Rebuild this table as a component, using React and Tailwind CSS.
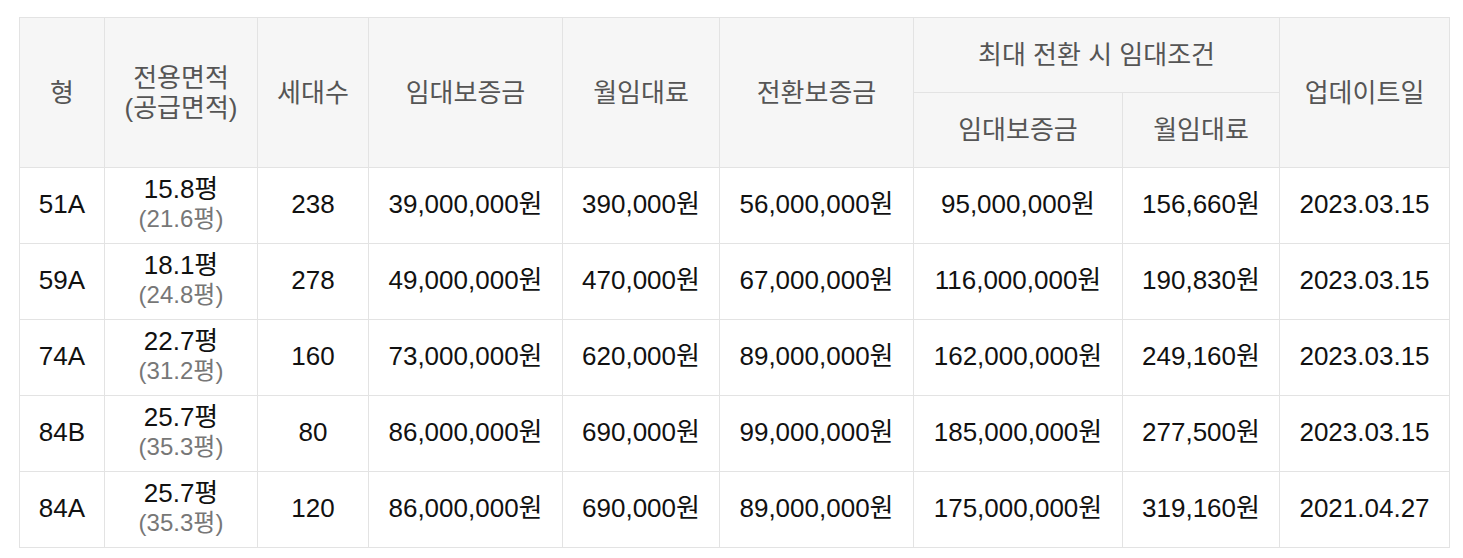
const rows = [
  { type: '51A', area: '15.8평', supply: '(21.6평)', units: '238', deposit: '39,000,000원', rent: '390,000원', conv: '56,000,000원', maxDeposit: '95,000,000원', maxRent: '156,660원', date: '2023.03.15' },
  { type: '59A', area: '18.1평', supply: '(24.8평)', units: '278', deposit: '49,000,000원', rent: '470,000원', conv: '67,000,000원', maxDeposit: '116,000,000원', maxRent: '190,830원', date: '2023.03.15' },
  { type: '74A', area: '22.7평', supply: '(31.2평)', units: '160', deposit: '73,000,000원', rent: '620,000원', conv: '89,000,000원', maxDeposit: '162,000,000원', maxRent: '249,160원', date: '2023.03.15' },
  { type: '84B', area: '25.7평', supply: '(35.3평)', units: '80', deposit: '86,000,000원', rent: '690,000원', conv: '99,000,000원', maxDeposit: '185,000,000원', maxRent: '277,500원', date: '2023.03.15' },
  { type: '84A', area: '25.7평', supply: '(35.3평)', units: '120', deposit: '86,000,000원', rent: '690,000원', conv: '89,000,000원', maxDeposit: '175,000,000원', maxRent: '319,160원', date: '2021.04.27' },
]

const th = 'border border-[#e3e3e3] bg-[#f6f6f6] font-normal text-[26px] text-[#555] leading-[30px] align-middle'
const td = 'border border-[#e3e3e3] pb-[4px] text-[26px] text-[#111] leading-[30px] align-middle text-center'

function App() {
  return (
    <div className="min-h-screen bg-white pt-[17px] pl-[19px] font-['Liberation_Sans','Noto_Sans_CJK_KR',sans-serif]">
      <table className="table-fixed border-collapse w-[1430px] border-t border-t-[#cfcfcf]">
        <colgroup>
          <col className="w-[85px]" />
          <col className="w-[153px]" />
          <col className="w-[111px]" />
          <col className="w-[194px]" />
          <col className="w-[157px]" />
          <col className="w-[194px]" />
          <col className="w-[209px]" />
          <col className="w-[157px]" />
          <col className="w-[170px]" />
        </colgroup>
        <thead>
          <tr className="h-[75px]">
            <th rowSpan={2} className={th}>형</th>
            <th rowSpan={2} className={th}>전용면적<br />(공급면적)</th>
            <th rowSpan={2} className={th}>세대수</th>
            <th rowSpan={2} className={th}>임대보증금</th>
            <th rowSpan={2} className={th}>월임대료</th>
            <th rowSpan={2} className={th}>전환보증금</th>
            <th colSpan={2} className={th}>최대 전환 시 임대조건</th>
            <th rowSpan={2} className={th}>업데이트일</th>
          </tr>
          <tr className="h-[75px]">
            <th className={th}>임대보증금</th>
            <th className={th}>월임대료</th>
          </tr>
        </thead>
        <tbody>
          {rows.map((r) => (
            <tr key={r.type + r.units} className="h-[76px]">
              <td className={td}>{r.type}</td>
              <td className={td}>
                <div>{r.area}</div>
                <div className="text-[24px] text-[#777]">{r.supply}</div>
              </td>
              <td className={td}>{r.units}</td>
              <td className={td}>{r.deposit}</td>
              <td className={td}>{r.rent}</td>
              <td className={td}>{r.conv}</td>
              <td className={td}>{r.maxDeposit}</td>
              <td className={td}>{r.maxRent}</td>
              <td className={td}>{r.date}</td>
            </tr>
          ))}
        </tbody>
      </table>
    </div>
  )
}

export default App
